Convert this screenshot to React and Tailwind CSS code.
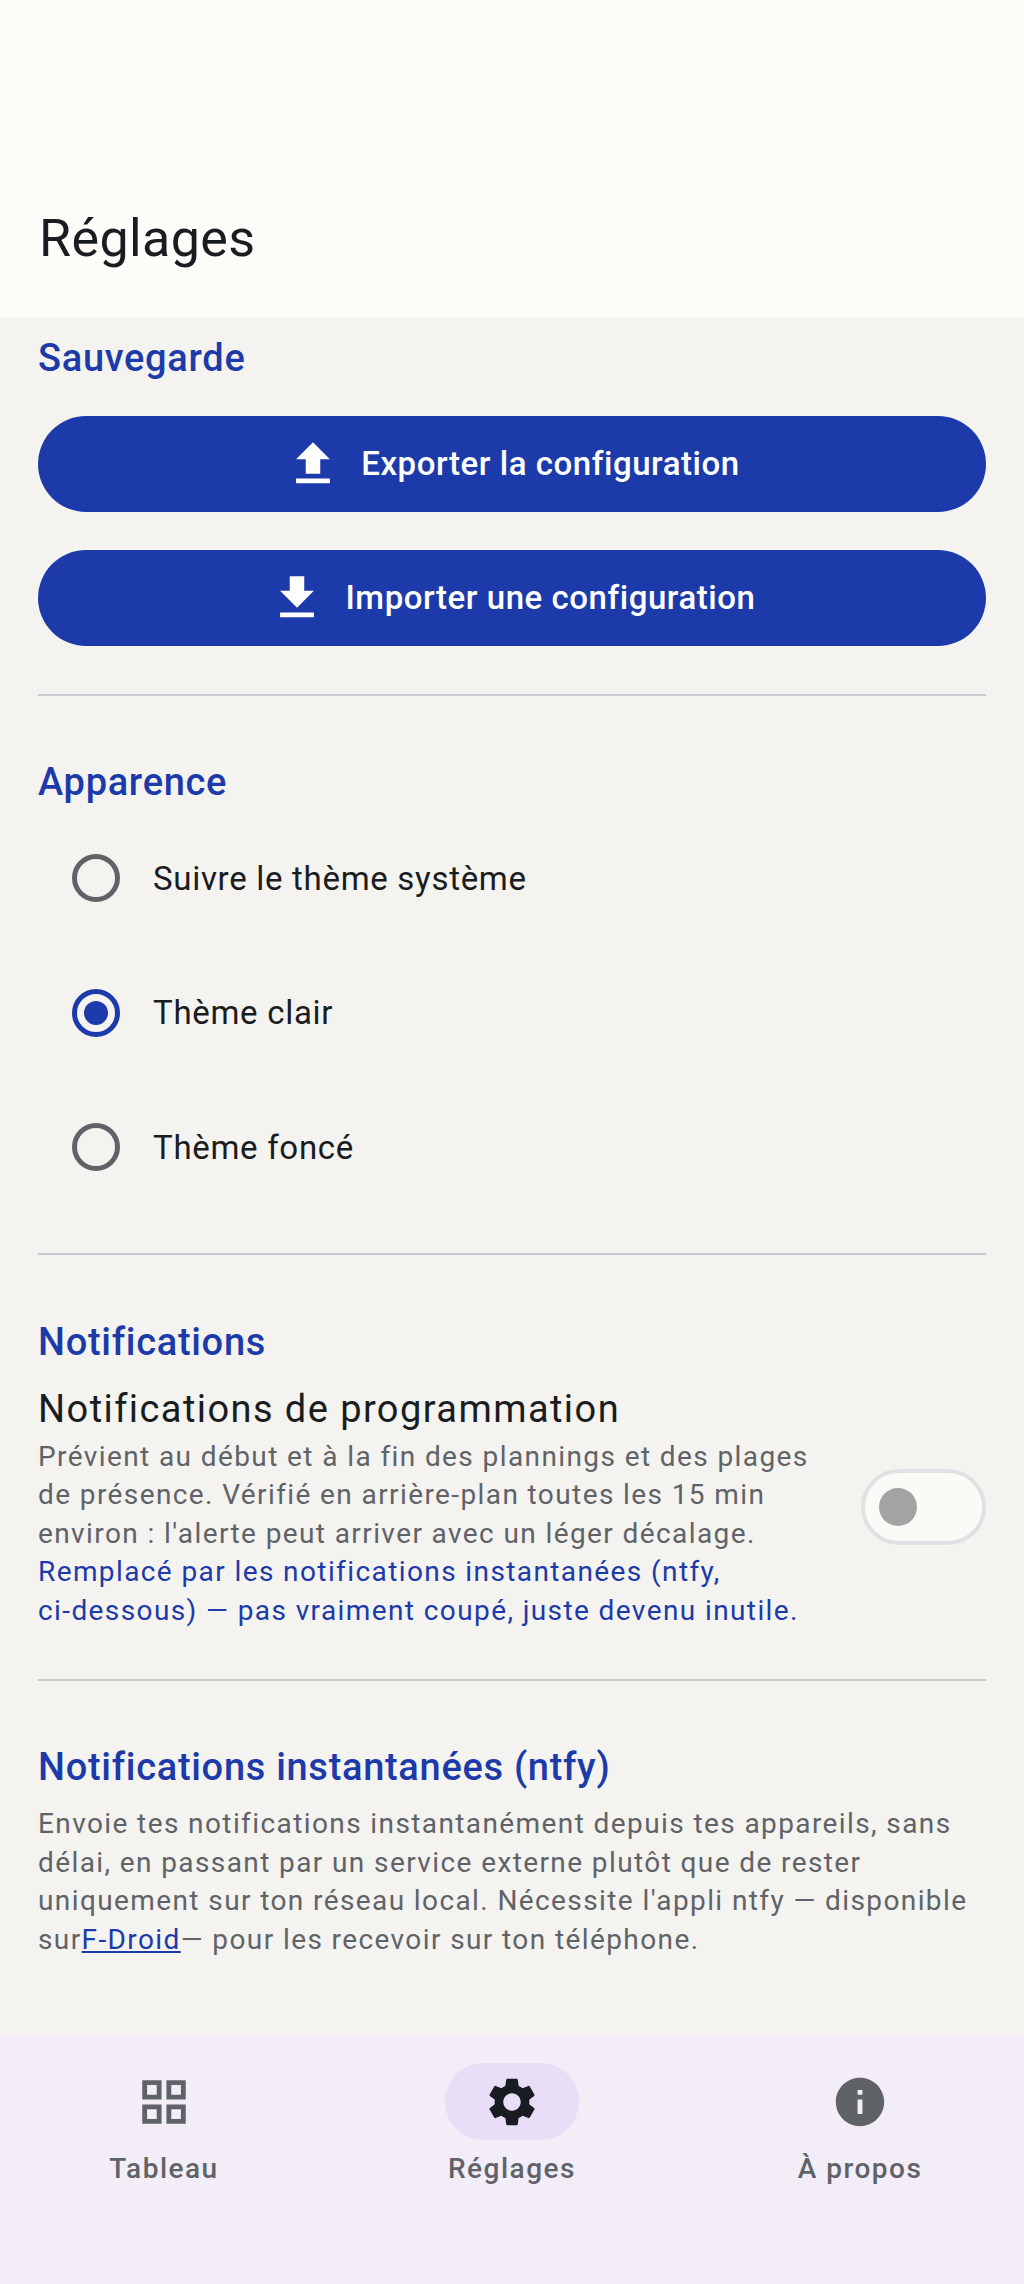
import React from "react";
import { MdFileUpload, MdFileDownload, MdSettings, MdInfo, MdOutlineGridView } from "react-icons/md";

const SectionTitle = ({ children }) => (
    <h2 className="text-[38px] leading-[48px] font-medium tracking-[0.7px] text-[#1c3aa9]">{children}</h2>
);

const Divider = () => <div className="h-[2px] bg-[#cac8d0]" />;

const ActionButton = ({ icon: Icon, children }) => (
    <button className="h-24 rounded-full bg-[#1c3aa9] text-white flex items-center justify-center gap-[19px] text-[33px] font-medium tracking-[0.55px]">
        <Icon className="text-[58px]" />
        {children}
    </button>
);

const Radio = ({ label, checked }) => (
    <div className="h-[134.5px] flex items-center pl-[34px] gap-[33px]">
        <div className={`w-12 h-12 rounded-full border-[5px] flex items-center justify-center ${checked ? "border-[#1c3aa9]" : "border-[#5f6368]"}`}>
            {checked && <div className="w-6 h-6 rounded-full bg-[#1c3aa9]" />}
        </div>
        <span className="text-[33px] tracking-[0.7px] text-[#191c20]">{label}</span>
    </div>
);

const NavItem = ({ icon: Icon, label, active, iconClass }) => (
    <div className="flex flex-col items-center">
        <div className={`w-[134px] h-[77px] rounded-[38px] flex items-center justify-center ${active ? "bg-[#e8def8]" : ""}`}>
            <Icon className={iconClass} />
        </div>
        <span className="mt-[9px] text-[28px] leading-[40px] font-medium tracking-[1.5px] text-[#5f6368]">{label}</span>
    </div>
);

export default function App() {
    return (
        <div className="w-[1024px] h-[2284px] flex flex-col overflow-hidden bg-[#f4f3ef] font-['Roboto',sans-serif]">

            {/* Header */}
            <header className="h-[317px] shrink-0 bg-[#fdfcf8] px-[39px] pt-[205px]">
                <h1 className="text-[52px] leading-[68px] tracking-[0.4px] text-[#191c20]">Réglages</h1>
            </header>

            <main className="flex-1 overflow-hidden px-[38px] pt-[17px] flex flex-col">

                {/* Sauvegarde */}
                <SectionTitle>Sauvegarde</SectionTitle>
                <div className="mt-[34px] flex flex-col gap-[38px]">
                    <ActionButton icon={MdFileUpload}>Exporter la configuration</ActionButton>
                    <ActionButton icon={MdFileDownload}>Importer une configuration</ActionButton>
                </div>
                <div className="mt-[48px]"><Divider /></div>

                {/* Apparence */}
                <div className="mt-[62px]"><SectionTitle>Apparence</SectionTitle></div>
                <div className="mt-[5px]">
                    <Radio label="Suivre le thème système" />
                    <Radio label="Thème clair" checked />
                    <Radio label="Thème foncé" />
                </div>
                <div className="mt-[38px]"><Divider /></div>

                {/* Notifications */}
                <div className="mt-[63px]"><SectionTitle>Notifications</SectionTitle></div>
                <div className="mt-[18px] flex items-center justify-between">
                    <div className="w-[790px]">
                        <p className="text-[38px] leading-[50px] tracking-[1.43px] text-[#191c20]">Notifications de programmation</p>
                        <p className="mt-[4px] text-[28px] leading-[38.5px] tracking-[1.4px] text-[#5f6368]">
                            Prévient au début et à la fin des plannings et des plages de présence. Vérifié en arrière-plan toutes les 15 min environ : l'alerte peut arriver avec un léger décalage.
                        </p>
                        <p className="text-[28px] leading-[38.5px] tracking-[1.4px] text-[#1c3aa9]">
                            Remplacé par les notifications instantanées (ntfy, <span className="whitespace-nowrap">ci-dessous)</span> — pas vraiment coupé, juste devenu inutile.
                        </p>
                    </div>
                    <div className="w-[125px] h-[76px] rounded-full border-4 border-[#e0e1e4] bg-[#fbfaf7] flex items-center pl-[14px]">
                        <div className="w-[38px] h-[38px] rounded-full bg-[#a3a3a4]" />
                    </div>
                </div>
                <div className="mt-[49px]"><Divider /></div>

                {/* ntfy */}
                <h2 className="mt-[61px] text-[38px] leading-[50px] font-medium tracking-[0.7px] text-[#1c3aa9]">Notifications instantanées (ntfy)</h2>
                <p className="mt-[13px] text-[28px] leading-[38.5px] tracking-[1.4px] text-[#5f6368]">
                    Envoie tes notifications instantanément depuis tes appareils, sans délai, en passant par un service externe plutôt que de rester uniquement sur ton réseau local. Nécessite l'appli ntfy — disponible sur<span className="text-[#1c3aa9] underline">F-Droid</span>— pour les recevoir sur ton téléphone.
                </p>
            </main>

            {/* Bottom navigation */}
            <nav className="h-[250px] shrink-0 bg-[#f3edf7] grid grid-cols-[348px_348px_348px] justify-center pt-[29px]">
                <NavItem icon={MdOutlineGridView} label="Tableau" iconClass="text-[58px] text-[#5f6368]" />
                <NavItem icon={MdSettings} label="Réglages" active iconClass="text-[58px] text-[#191c20]" />
                <NavItem icon={MdInfo} label="À propos" iconClass="text-[58px] text-[#5f6368]" />
            </nav>
        </div>
    );
}
